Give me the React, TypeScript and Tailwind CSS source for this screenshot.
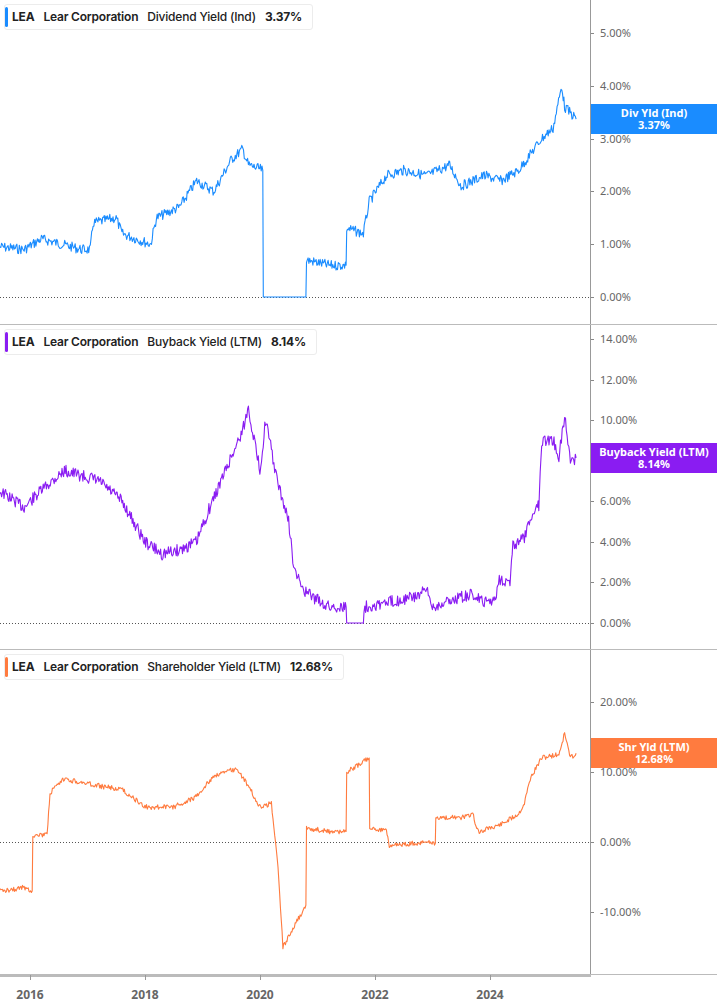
import React from "react";

type P = [number, number];
const X0 = 2015.48;
const PX = 57.5;

function rng(seed: number) {
  let s = seed;
  return () => {
    s = (s * 9301 + 49297) % 233280;
    return s / 233280;
  };
}

function build(pts: P[], yOf: (v: number) => number, noise: number, seed: number) {
  const r = rng(seed);
  const out: string[] = [];
  for (let i = 0; i < pts.length - 1; i++) {
    const [y1, v1] = pts[i];
    const [y2, v2] = pts[i + 1];
    const x1 = (y1 - X0) * PX;
    const x2 = (y2 - X0) * PX;
    const n = Math.max(1, Math.round((x2 - x1) / 0.8));
    for (let k = 0; k < n; k++) {
      const t = k / n;
      const v = v1 + (v2 - v1) * t;
      const jitter = x2 - x1 < 2 ? 0 : (r() - 0.5) * noise * (Math.abs(v) > 0.05 ? 1 : 0);
      out.push(`${(x1 + (x2 - x1) * t).toFixed(1)},${(yOf(v) + jitter).toFixed(1)}`);
    }
  }
  const last = pts[pts.length - 1];
  out.push(`${((last[0] - X0) * PX).toFixed(1)},${yOf(last[1]).toFixed(1)}`);
  return out.join(" ");
}

const div: P[] = [[2015.48,0.95],[2015.9,0.9],[2016.2,1.1],[2016.9,0.9],[2017.05,0.9],[2017.1,1.4],[2017.5,1.5],[2017.6,1.2],[2018.1,1.0],[2018.2,1.5],[2018.6,1.7],[2018.9,2.2],[2019.2,2.0],[2019.5,2.6],[2019.7,2.8],[2019.8,2.5],[2020.05,2.4],[2020.06,0],[2020.8,0],[2020.81,0.7],[2021.2,0.6],[2021.5,0.6],[2021.51,1.3],[2021.8,1.2],[2021.9,1.8],[2022.2,2.3],[2022.5,2.4],[2022.9,2.3],[2023.3,2.5],[2023.5,2.1],[2023.9,2.3],[2024.2,2.2],[2024.5,2.4],[2024.7,2.7],[2024.9,3.0],[2025.1,3.2],[2025.25,4.0],[2025.3,3.6],[2025.5,3.37]];
const buy: P[] = [[2015.48,6.5],[2015.9,5.7],[2016.3,6.8],[2016.6,7.5],[2017.2,7.0],[2017.6,6.0],[2018.0,4.0],[2018.3,3.4],[2018.6,3.6],[2018.9,4.0],[2019.1,5.5],[2019.4,7.5],[2019.7,9.5],[2019.8,10.6],[2020.0,7.5],[2020.1,10.0],[2020.3,7.0],[2020.5,5.0],[2020.6,2.5],[2020.8,1.5],[2021.2,0.8],[2021.5,0.8],[2021.51,0],[2021.8,0],[2021.81,0.8],[2022.2,1.0],[2022.7,1.3],[2022.9,1.6],[2023.0,0.8],[2023.4,1.2],[2023.7,1.4],[2023.9,1.0],[2024.1,1.2],[2024.15,2.2],[2024.35,2.0],[2024.4,3.8],[2024.6,4.2],[2024.8,5.8],[2024.85,5.8],[2024.9,9.0],[2025.1,9.0],[2025.2,8.2],[2025.3,10.2],[2025.4,8.0],[2025.5,8.14]];
const shr: P[] = [[2015.48,-7],[2015.9,-6.5],[2016.04,-7],[2016.05,1],[2016.3,1],[2016.35,7],[2016.6,9],[2017.2,8],[2017.6,7.5],[2018.0,5],[2018.5,5],[2018.9,6.5],[2019.2,9.5],[2019.6,10.5],[2019.8,8],[2020.0,5],[2020.2,5.5],[2020.3,-2],[2020.4,-15],[2020.6,-12],[2020.8,-9],[2020.81,2],[2021.2,1.5],[2021.5,1.5],[2021.51,10],[2021.9,12],[2021.91,2],[2022.2,1.5],[2022.25,-0.5],[2022.9,0],[2023.05,-0.2],[2023.06,3.5],[2023.5,3.5],[2023.7,4],[2023.8,1.5],[2024.0,2],[2024.2,2.5],[2024.5,4],[2024.6,5.5],[2024.7,9],[2024.9,12],[2025.2,12.5],[2025.3,15.5],[2025.4,12],[2025.5,12.68]];

type Panel = {
  name: string;
  val: string;
  color: string;
  accent: string;
  boxClass: string;
  boxTitle: string;
  boxTop: number;
  zero: number;
  ticks: { y: number; t: string }[];
  pts: P[];
  yOf: (v: number) => number;
  noise: number;
  seed: number;
};

const panels: Panel[] = [
  {
    name: "Dividend Yield (Ind)", val: "3.37%", color: "#1a8cff", accent: "bg-[#1a8cff]", boxClass: "bg-[#1a8cff]",
    boxTitle: "Div Yld (Ind)", boxTop: 104, zero: 297,
    ticks: [{ y: 33, t: "5.00%" }, { y: 86, t: "4.00%" }, { y: 139, t: "3.00%" }, { y: 191, t: "2.00%" }, { y: 244, t: "1.00%" }, { y: 297, t: "0.00%" }],
    pts: div, yOf: (v) => 297 - v * 52.8, noise: 10, seed: 7,
  },
  {
    name: "Buyback Yield (LTM)", val: "8.14%", color: "#8a1cf2", accent: "bg-[#8a1cf2]", boxClass: "bg-[#8a1cf2]",
    boxTitle: "Buyback Yield (LTM)", boxTop: 118, zero: 298,
    ticks: [{ y: 14, t: "14.00%" }, { y: 55, t: "12.00%" }, { y: 95, t: "10.00%" }, { y: 176, t: "6.00%" }, { y: 217, t: "4.00%" }, { y: 257, t: "2.00%" }, { y: 298, t: "0.00%" }],
    pts: buy, yOf: (v) => 298 - v * 20.3, noise: 12, seed: 13,
  },
  {
    name: "Shareholder Yield (LTM)", val: "12.68%", color: "#ff7b3f", accent: "bg-[#ff7b3f]", boxClass: "bg-[#ff7b3f]",
    boxTitle: "Shr Yld (LTM)", boxTop: 88, zero: 192,
    ticks: [{ y: 52, t: "20.00%" }, { y: 122, t: "10.00%" }, { y: 192, t: "0.00%" }, { y: 262, t: "-10.00%" }],
    pts: shr, yOf: (v) => 192 - v * 7.0, noise: 5, seed: 21,
  },
];

function PanelView({ p }: { p: Panel }) {
  return (
    <div className="flex h-[325px] border-b border-[#bbbbbb]">
      <div className="relative w-[590px] shrink-0">
        <svg width="590" height="325" className="absolute left-0 top-0">
          <line x1="0" x2="590" y1={p.zero + 0.5} y2={p.zero + 0.5} stroke="#555" strokeWidth="1" strokeDasharray="1 2" />
          <polyline points={build(p.pts, p.yOf, p.noise, p.seed)} fill="none" stroke={p.color} strokeWidth="1.1" strokeLinejoin="round" />
        </svg>
        <div className="absolute left-[4px] top-[4px] flex h-[26px] items-center gap-[9px] rounded-[3px] border border-[#ececec] bg-white pl-[7px] pr-[10px] text-[12px] tracking-[-0.2px] text-[#222] [font-family:Inter,sans-serif]">
          <div className={`absolute left-0 top-[2px] h-[20px] w-[3px] rounded-[2px] ${p.accent}`} />
          <span className="font-bold">LEA</span>
          <span className="font-semibold">Lear Corporation</span>
          <span className="font-medium">{p.name}</span>
          <span className="font-bold">{p.val}</span>
        </div>
      </div>
      <div className="relative flex-1 border-l border-[#999]">
        {p.ticks.map((t) => (
          <div key={t.t} className="absolute left-0 flex items-center" style={{ top: t.y - 7 }}>
            <div className="h-px w-[3px] bg-[#888]" />
            <span className="ml-[6px] text-[11px] leading-[14px] text-[#666] [font-family:'Liberation_Sans',Arial,sans-serif]">{t.t}</span>
          </div>
        ))}
        <div className={`absolute left-0 right-0 flex h-[30px] flex-col items-center justify-center text-[11px] font-bold leading-[12px] text-white [font-family:'Liberation_Sans',Arial,sans-serif] ${p.boxClass}`} style={{ top: p.boxTop }}>
          <span>{p.boxTitle}</span>
          <span>{p.val}</span>
        </div>
      </div>
    </div>
  );
}

export default function App() {
  const years = ["2016", "2018", "2020", "2022", "2024"];
  return (
    <div className="flex h-[1005px] w-[717px] flex-col overflow-hidden bg-white">
      {panels.map((p) => (
        <PanelView key={p.name} p={p} />
      ))}
      <div className="relative h-[30px]">
        <div className="absolute left-0 top-0 h-[2px] w-[591px] bg-[#bbb]" />
        {years.map((y, i) => (
          <div key={y} className="absolute top-0 flex flex-col items-center" style={{ left: 30 + i * 115 - 20, width: 40 }}>
            <div className="h-[5px] w-px bg-[#999]" />
            <span className="mt-[6px] text-[12px] font-bold text-[#666] [font-family:'Liberation_Sans',Arial,sans-serif]">{y}</span>
          </div>
        ))}
      </div>
    </div>
  );
}
